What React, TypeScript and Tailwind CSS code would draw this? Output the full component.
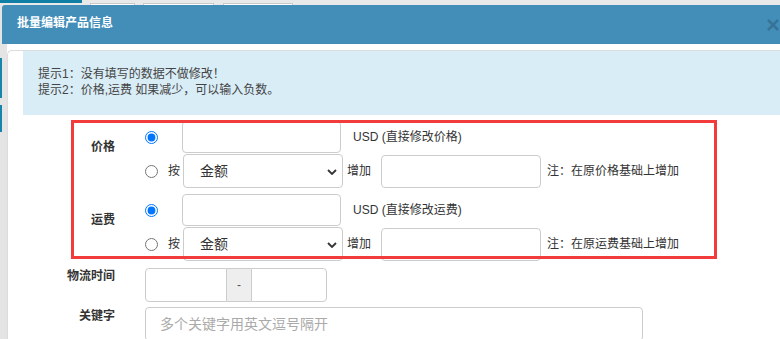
import React from "react";

const font = "font-['Liberation_Sans','Noto_Sans_CJK_SC',sans-serif]";

function Chevron() {
  return (
    <svg width="10" height="6" viewBox="0 0 10 6" className="pointer-events-none">
      <polyline points="1,1 5,5 9,1" fill="none" stroke="#333" strokeWidth="1.8" />
    </svg>
  );
}

function AmountSelect() {
  return (
    <div className="relative ml-[3px] flex h-[34px] w-[160px] items-center rounded-[4px] border border-[#ccc] bg-white">
      <select className="h-full w-full appearance-none bg-transparent pl-[16px] text-[14px] leading-[18px] text-[#333] outline-none">
        <option>金额</option>
        <option>百分比</option>
      </select>
      <div className="absolute right-[5px] top-[14px]">
        <Chevron />
      </div>
    </div>
  );
}

function AdjustGroup({ name, label, unitNote, addNote }: { name: string; label: string; unitNote: string; addNote: string }) {
  return (
    <div className="flex">
      <div className="w-[107px] pt-[18px] text-right text-[12px] font-bold leading-[16px] text-[#333]">{label}</div>
      <div className="ml-[30px] flex flex-col gap-[1px]">
        {/* Direct value */}
        <div className="flex h-[32px] items-center">
          <input type="radio" name={name} defaultChecked className="h-[13px] w-[13px]" />
          <input className="ml-[24px] h-[32px] w-[159px] rounded-[4px] border border-[#ccc] px-[10px] text-[14px] outline-none" />
          <span className="ml-[12px] text-[12px] leading-[16px] text-[#333]">{unitNote}</span>
        </div>
        {/* Increase by */}
        <div className="flex h-[34px] items-center">
          <input type="radio" name={name} className="h-[13px] w-[13px]" />
          <span className="ml-[10px] text-[12px] leading-[16px] text-[#333]">按</span>
          <AmountSelect />
          <span className="ml-[4px] text-[12px] leading-[16px] text-[#333]">增加</span>
          <input className="ml-[10px] h-[33px] w-[160px] rounded-[4px] border border-[#ccc] px-[10px] text-[14px] outline-none" />
          <span className="ml-[6px] text-[12px] leading-[16px] text-[#333]">{addNote}</span>
        </div>
      </div>
    </div>
  );
}

export default function App() {
  return (
    <div className={`relative h-[339px] w-[780px] overflow-hidden bg-[#e4e4e4] ${font}`}>
      {/* Page behind the dialog */}
      <div className="flex h-[5px] items-end bg-[#e9e9e9]">
        <div className="mb-[2px] h-[3px] w-[82px] self-start bg-[#0f7fa6]" />
        <div className="ml-[8px] h-[2px] w-[45px] border-x border-t border-[#c9c9c9] bg-white" />
        <div className="ml-[8px] h-[2px] w-[71px] border-x border-t border-[#c9c9c9] bg-white" />
        <div className="ml-[9px] h-[2px] w-[70px] border-x border-t border-[#c9c9c9] bg-white" />
      </div>
      <div className="flex flex-col">
        <div className="mt-[53px] h-[40px] w-[2px] bg-[#1685ab]" />
        <div className="mt-[7px] h-[27px] w-[2px] bg-[#1685ab]" />
      </div>

      {/* Dialog */}
      <div className="absolute left-[2px] top-[5px] flex h-[340px] w-[800px] flex-col">
        <div className="flex h-[39px] items-center justify-between rounded-tl-[3px] bg-[#438eb9] pl-[15px] pr-[22px]">
          <span className="pb-[3px] text-[12px] font-bold leading-[16px] text-white">批量编辑产品信息</span>
          <span className="text-[24px] font-bold leading-none text-black/20">×</span>
        </div>
        <div className="ml-[5px] flex-1 bg-white pt-[6px]">
          <div className="h-full rounded-tl-[5px] border-l border-t border-[#dcdcdc]">
            <div className="ml-[15px] bg-[#d9edf7] pb-[17px] pl-[15px] pt-[15px] text-[12px] leading-[16px] text-[#444]">
              <p>提示1：没有填写的数据不做修改！</p>
              <p>提示2：价格,运费 如果减少，可以输入负数。</p>
            </div>

            <div className="mt-[6px] flex flex-col gap-[6px]">
              <AdjustGroup name="price" label="价格" unitNote="USD (直接修改价格)" addNote="注：在原价格基础上增加" />
              <AdjustGroup name="freight" label="运费" unitNote="USD (直接修改运费)" addNote="注：在原运费基础上增加" />

              <div className="mt-[1px] flex">
                <div className="w-[107px] text-right text-[12px] font-bold leading-[16px] text-[#333]">物流时间</div>
                <div className="ml-[30px] flex h-[34px]">
                  <input className="h-full w-[82px] rounded-l-[4px] border border-[#ccc] px-[8px] text-[14px] outline-none" />
                  <div className="flex w-[24px] items-center justify-center border-y border-[#ccc] bg-[#eee] text-[12px] text-[#555]">-</div>
                  <input className="h-full w-[76px] rounded-r-[4px] border border-[#ccc] px-[8px] text-[14px] outline-none" />
                </div>
              </div>

              <div className="-mt-[1px] flex">
                <div className="w-[107px] pt-[1px] text-right text-[12px] font-bold leading-[16px] text-[#333]">关键字</div>
                <input
                  placeholder="多个关键字用英文逗号隔开"
                  className="ml-[30px] h-[34px] w-[498px] rounded-[4px] border border-[#ccc] px-[14px] text-[14px] text-[#333] outline-none placeholder:text-[#aaa]"
                />
              </div>
            </div>
          </div>
        </div>
      </div>

      {/* Annotation box */}
      <div className="absolute left-[71px] top-[120px] h-[139px] w-[646px] border-[3px] border-[#f23b3b]" />
    </div>
  );
}
